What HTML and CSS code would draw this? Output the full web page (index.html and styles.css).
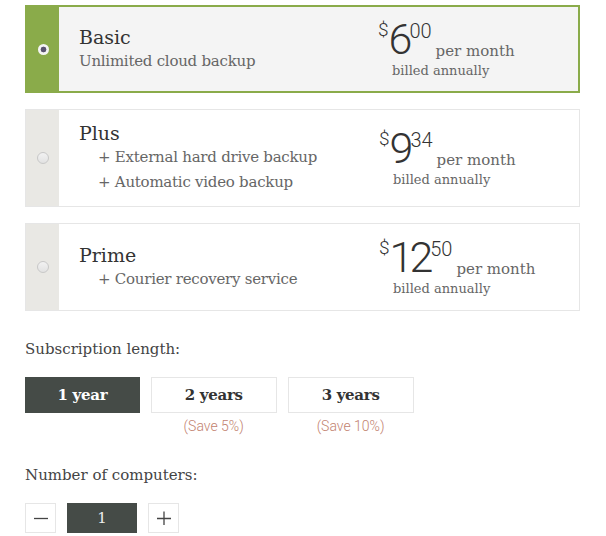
FILE: index.html
```html
<!DOCTYPE html>
<html>
<head>
<meta charset="utf-8">
<link rel="stylesheet" href="styles.css">
</head>
<body>
<div class="page">
  <div class="plans">
    <div class="plan selected">
      <div class="plan-radio"><span class="radio on"></span></div>
      <div class="plan-body">
        <div class="plan-info">
          <div class="plan-name">Basic</div>
          <div class="plan-desc">Unlimited cloud backup</div>
        </div>
        <div class="plan-price">
          <div class="price-row"><span class="cur">$</span><span class="whole">6</span><span class="cents">00</span><span class="per">per month</span></div>
          <div class="billed">billed annually</div>
        </div>
      </div>
    </div>
    <div class="plan tall">
      <div class="plan-radio"><span class="radio"></span></div>
      <div class="plan-body">
        <div class="plan-info">
          <div class="plan-name">Plus</div>
          <div class="plan-feat">+ External hard drive backup</div>
          <div class="plan-feat">+ Automatic video backup</div>
        </div>
        <div class="plan-price">
          <div class="price-row"><span class="cur">$</span><span class="whole">9</span><span class="cents">34</span><span class="per">per month</span></div>
          <div class="billed">billed annually</div>
        </div>
      </div>
    </div>
    <div class="plan">
      <div class="plan-radio"><span class="radio"></span></div>
      <div class="plan-body">
        <div class="plan-info">
          <div class="plan-name">Prime</div>
          <div class="plan-feat">+ Courier recovery service</div>
        </div>
        <div class="plan-price">
          <div class="price-row"><span class="cur">$</span><span class="whole">12</span><span class="cents">50</span><span class="per">per month</span></div>
          <div class="billed">billed annually</div>
        </div>
      </div>
    </div>
  </div>

  <div class="label">Subscription length:</div>
  <div class="lengths">
    <div class="len"><div class="btn active">1 year</div></div>
    <div class="len"><div class="btn">2 years</div><div class="save">(Save 5%)</div></div>
    <div class="len"><div class="btn">3 years</div><div class="save">(Save 10%)</div></div>
  </div>

  <div class="label computers">Number of computers:</div>
  <div class="stepper">
    <div class="step-btn">
      <svg width="14" height="14" viewBox="0 0 14 14"><path d="M0 7.5H14" stroke="#444" stroke-width="1.3"/></svg>
    </div>
    <div class="step-val">1</div>
    <div class="step-btn">
      <svg width="14" height="14" viewBox="0 0 14 14"><path d="M0 7.5H14M7 0.5V14" stroke="#444" stroke-width="1.3"/></svg>
    </div>
  </div>
</div>
</body>
</html>
```

FILE: styles.css
```css
* { box-sizing: border-box; }
html, body { margin: 0; padding: 0; background: #fff; }
body {
  font-family: "DejaVu Serif", "Liberation Serif", serif;
  color: #333;
}
.page {
  padding: 5px 26px 0 25px;
}
.plans {
  display: flex;
  flex-direction: column;
  gap: 16px;
}
.plan {
  display: flex;
  height: 88px;
  border: 1px solid #e6e6e6;
  background: #fff;
}
.plan.tall { height: 98px; }
.plan.selected {
  border: 2px solid #8aab4a;
  background: #f4f4f4;
}
.plan-radio {
  width: 33px;
  flex: none;
  background: #e9e8e4;
  display: flex;
  align-items: center;
  justify-content: center;
}
.plan.selected .plan-radio {
  width: 32px;
  background: #8aab4a;
}
.radio {
  width: 12px;
  height: 12px;
  border-radius: 50%;
  border: 1px solid #c8c8c8;
  background: linear-gradient(#f2f2f2, #e2e2e2);
}
.radio.on {
  width: 11px;
  height: 11px;
  border: none;
  background: radial-gradient(circle, #5a5470 0 2.6px, #f4f4f4 3.2px);
}
.plan-body {
  flex: 1;
  display: flex;
  align-items: center;
  padding-left: 20px;
}
.plan-info {
  flex: 1;
}
.plan-name {
  font-size: 19px;
  line-height: 24px;
  color: #333;
}
.plan-desc, .plan-feat {
  font-size: 15px;
  line-height: 25px;
  color: #666;
  letter-spacing: -0.25px;
}
.plan-feat { padding-left: 19px; }
.plan-price {
  width: 200px;
  flex: none;
  padding-top: 4px;
}
.price-row {
  display: flex;
  align-items: flex-start;
  font-family: Roboto, "Liberation Sans", sans-serif;
  color: #333;
  height: 38px;
}
.cur {
  font-weight: 300;
  font-size: 19px;
  line-height: 19px;
  margin-top: -1px;
}
.whole {
  font-weight: 300;
  font-size: 43px;
  line-height: 36px;
  letter-spacing: -4px;
}
.cents {
  font-weight: 300;
  font-size: 20px;
  line-height: 20px;
  margin-left: 1px;
}
.per {
  font-family: "DejaVu Serif", serif;
  font-size: 15px;
  color: #666;
  align-self: flex-end;
  margin-left: 4px;
  line-height: 18px;
  margin-bottom: -1px;
}
.billed {
  font-size: 13px;
  color: #666;
  padding-left: 14px;
  line-height: 20px;
  margin-top: 2px;
}
.label {
  font-size: 15px;
  color: #444;
  margin-top: 28px;
  line-height: 20px;
}
.lengths {
  display: flex;
  gap: 11px;
  margin-top: 18px;
}
.len {
  display: flex;
  flex-direction: column;
  align-items: center;
}
.btn {
  height: 36px;
  padding: 0 33px;
  border: 1px solid #e6e6e6;
  display: flex;
  align-items: center;
  font-weight: bold;
  font-size: 15px;
  letter-spacing: -0.3px;
  color: #333;
}
.btn.active {
  padding: 0 31.5px;
  background: #454b47;
  border-color: #454b47;
  color: #fff;
}
.save {
  font-family: Roboto, "Liberation Sans", sans-serif;
  font-weight: 300;
  font-size: 14px;
  color: #c2826f;
  margin-top: 5px;
  line-height: 16px;
}
.label.computers { margin-top: 31px; }
.stepper {
  display: flex;
  gap: 11px;
  margin-top: 18px;
}
.step-btn {
  width: 31px;
  height: 30px;
  border: 1px solid #e6e6e6;
  display: flex;
  align-items: center;
  justify-content: center;
}
.step-val {
  width: 70px;
  height: 30px;
  background: #454b47;
  color: #eee;
  font-size: 15px;
  display: flex;
  align-items: center;
  justify-content: center;
}
```
